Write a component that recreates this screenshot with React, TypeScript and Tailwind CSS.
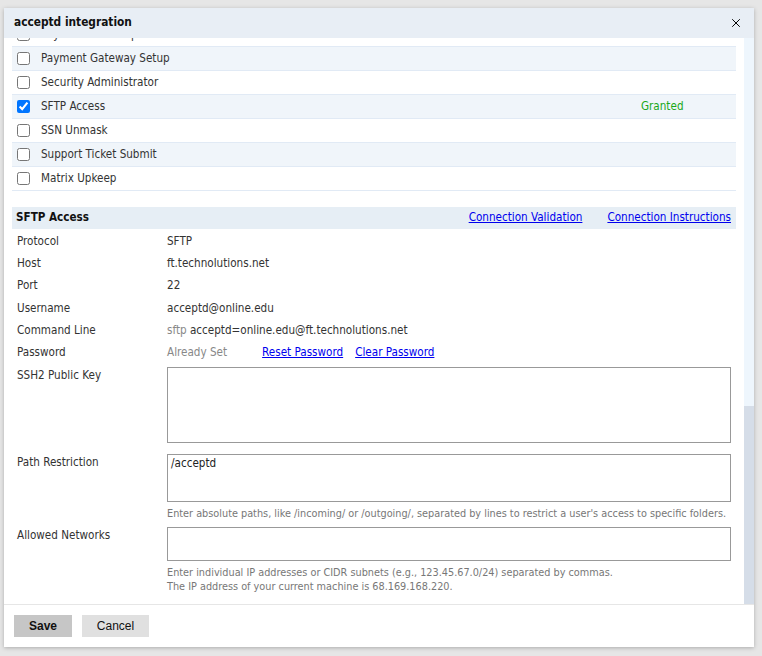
import { X } from "lucide-react";

type Role = { name: string; checked?: boolean; status?: string };

const roles: Role[] = [
  { name: "Payment Data Export" },
  { name: "Payment Gateway Setup" },
  { name: "Security Administrator" },
  { name: "SFTP Access", checked: true, status: "Granted" },
  { name: "SSN Unmask" },
  { name: "Support Ticket Submit" },
  { name: "Matrix Upkeep" },
];

const details = [
  { label: "Protocol", value: "SFTP" },
  { label: "Host", value: "ft.technolutions.net" },
  { label: "Port", value: "22" },
  { label: "Username", value: "acceptd@online.edu" },
];

function RoleRow({ role, shaded }: { role: Role; shaded: boolean }) {
  return (
    <div
      className={
        "flex items-center h-[24px] border-b border-[#e1eaf5] px-[5px] " +
        (shaded ? "bg-[#f0f5fa]" : "bg-white")
      }
    >
      <input
        type="checkbox"
        readOnly
        checked={!!role.checked}
        className="m-0 w-[13px] h-[13px] accent-[#0075ff]"
      />
      <span className="ml-[11px] w-[600px] text-[#333]">{role.name}</span>
      {role.status ? <span className="text-[#1aa81a]">{role.status}</span> : null}
    </div>
  );
}

function Row({ label, children }: { label: string; children: React.ReactNode }) {
  return (
    <div className="flex items-center h-[22.4px] px-[5px]">
      <div className="w-[150px] text-[#333]">{label}</div>
      <div className="flex-1 text-[#333]">{children}</div>
    </div>
  );
}

export default function App() {
  return (
    <div className="w-full h-[656px] bg-[#e6e6e6] pt-[8px] pl-[4px] font-['DejaVu_Sans_Condensed',sans-serif] text-[11.6px]">
      <div className="w-[750px] h-[639px] bg-white flex flex-col shadow-[0_1px_4px_rgba(0,0,0,0.25)]">
        <div className="h-[30px] bg-[#e8eef5] flex items-center justify-between pl-[10px] pr-[11px] shrink-0">
          <h1 className="font-bold text-[11.8px] text-[#111]">acceptd integration</h1>
          <X size={14} strokeWidth={1.7} className="text-black" />
        </div>

        <div className="flex h-[566px] shrink-0">
          <div className="w-[740px] overflow-hidden px-[8px]">
            <div className="-mt-[15px]">
              {roles.map((r, i) => (
                <RoleRow key={r.name} role={r} shaded={i % 2 === 1} />
              ))}
            </div>

            <div className="mt-[16px] h-[22px] bg-[#e6eef5] flex items-center px-[4px]">
              <span className="font-bold text-[#111] flex-1">SFTP Access</span>
              <a href="#" className="text-[#0000ee] underline">Connection Validation</a>
              <a href="#" className="ml-[25px] mr-[1px] text-[#0000ee] underline">Connection Instructions</a>
            </div>

            <div className="mt-[1px]">
              {details.map((d) => (
                <Row key={d.label} label={d.label}>
                  {d.value}
                </Row>
              ))}
              <Row label="Command Line">
                <span className="text-[#888]">sftp</span> acceptd=online.edu@ft.technolutions.net
              </Row>
              <Row label="Password">
                <span className="text-[#888]">Already Set</span>
                <a href="#" className="ml-[35px] text-[#0000ee] underline">Reset Password</a>
                <a href="#" className="ml-[12px] text-[#0000ee] underline">Clear Password</a>
              </Row>
            </div>

            <div className="flex px-[5px] pt-[2.6px]">
              <div className="w-[150px] leading-[14px] pt-[1px] text-[#333]">SSH2 Public Key</div>
              <textarea className="flex-1 h-[76px] border border-[#999] resize-none outline-none" />
            </div>

            <div className="flex px-[5px] mt-[11px]">
              <div className="w-[150px] leading-[14px] pt-[1px] text-[#333]">Path Restriction</div>
              <div className="flex-1">
                <textarea
                  className="block w-full h-[48px] border border-[#999] resize-none outline-none px-[3px] py-[1px] leading-[14px] text-[#222]"
                  defaultValue="/acceptd"
                />
                <p className="mt-[5px] leading-[14px] text-[10.8px] text-[#777] whitespace-nowrap">
                  Enter absolute paths, like /incoming/ or /outgoing/, separated by lines to restrict a user's access to specific folders.
                </p>
              </div>
            </div>

            <div className="flex px-[5px] mt-[6px]">
              <div className="w-[150px] leading-[14px] pt-[1px] text-[#333]">Allowed Networks</div>
              <div className="flex-1">
                <textarea className="block w-full h-[34px] border border-[#999] resize-none outline-none" />
                <p className="mt-[5px] leading-[14px] text-[10.8px] text-[#777]">
                  Enter individual IP addresses or CIDR subnets (e.g., 123.45.67.0/24) separated by commas.
                  <br />
                  The IP address of your current machine is 68.169.168.220.
                </p>
              </div>
            </div>
          </div>

          <div className="w-[10px] bg-[#eef6fd] flex flex-col justify-end">
            <div className="h-[198px] bg-[#d5dde8]" />
          </div>
        </div>

        <div className="flex-1 border-t border-[#e6e6e6] flex items-start gap-[10px] pl-[10px] pt-[10px] font-['Liberation_Sans',sans-serif]">
          <button className="w-[58px] h-[22px] bg-[#c6c6c6] font-bold text-[12px] text-[#111]">Save</button>
          <button className="w-[67px] h-[22px] bg-[#e0e0e0] text-[12px] text-[#111]">Cancel</button>
        </div>
      </div>
    </div>
  );
}
